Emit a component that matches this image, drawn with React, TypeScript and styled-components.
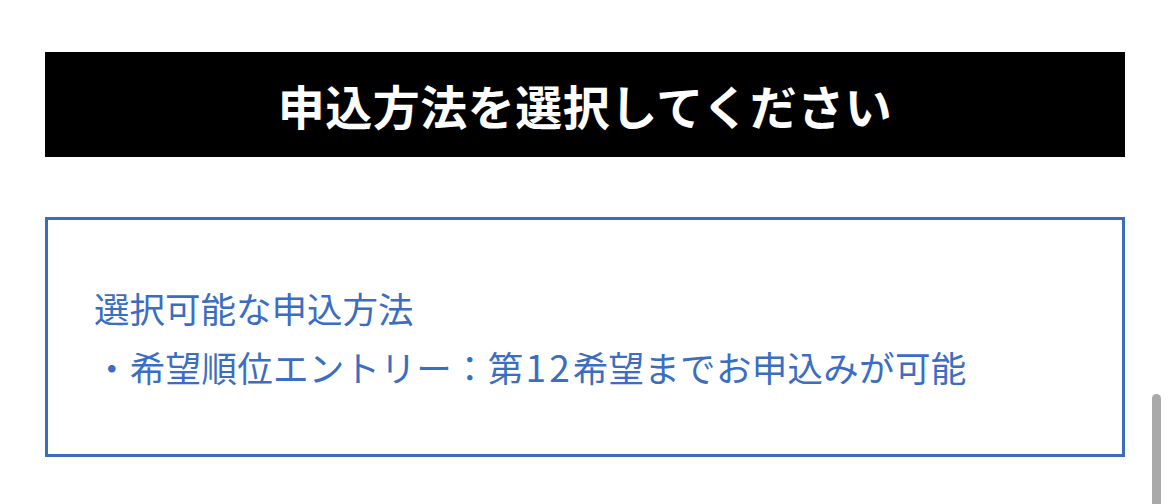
import * as React from "react";
import styled, { createGlobalStyle } from "styled-components";

const GlobalStyle = createGlobalStyle`
  html, body {
    margin: 0;
    padding: 0;
    background: #ffffff;
    overflow: hidden;
  }
  body {
    font-family: "Noto Sans CJK JP", "Noto Sans", sans-serif;
  }
`;

const Page = styled.div`
  width: 1170px;
  height: 504px;
  box-sizing: border-box;
  padding: 52px 45px 0 45px;
  display: flex;
  flex-direction: column;
  gap: 60px;
  position: relative;
`;

const Banner = styled.h1`
  margin: 0;
  height: 105px;
  background: #000000;
  color: #ffffff;
  display: flex;
  align-items: center;
  justify-content: center;
  font-size: 47px;
  font-weight: 700;
  letter-spacing: 0.5px;
`;

const InfoBox = styled.div`
  height: 240px;
  box-sizing: border-box;
  border: 3px solid #3a6bbd;
  padding: 0 46px;
  display: flex;
  flex-direction: column;
  justify-content: center;
  color: #3b6ec2;
  font-size: 35.5px;
  line-height: 58px;
`;

const Line = styled.div<{ $spacing?: number }>`
  white-space: nowrap;
  letter-spacing: ${(p) => p.$spacing ?? 0}px;
`;

const Num = styled.span`
  font-size: 37px;
  letter-spacing: 3px;
  margin-left: 2px;
`;

const ScrollThumb = styled.div`
  position: absolute;
  right: 9px;
  top: 394px;
  width: 9px;
  height: 120px;
  border-radius: 5px;
  background: #a9a9a9;
`;

export default function App() {
  return (
    <>
      <GlobalStyle />
      <Page>
        <Banner>申込方法を選択してください</Banner>
        <InfoBox>
          <Line>選択可能な申込方法</Line>
          <Line $spacing={0.3}>
            ・希望順位エントリー：第<Num>12</Num>希望までお申込みが可能
          </Line>
        </InfoBox>
        <ScrollThumb />
      </Page>
    </>
  );
}
